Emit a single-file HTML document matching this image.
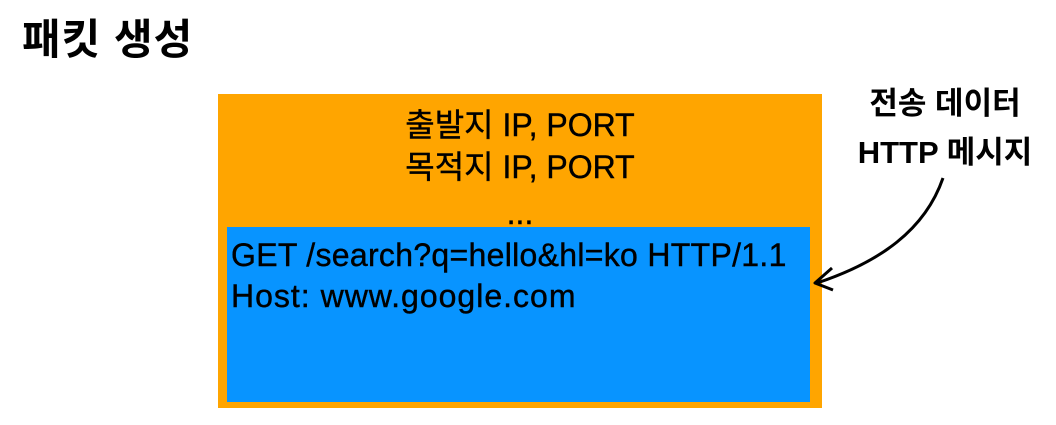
<!DOCTYPE html>
<html><head><meta charset="utf-8"><style>
body{margin:0;width:1056px;height:425px;background:#fff;position:relative;overflow:hidden;font-family:"Liberation Sans","Noto Sans CJK KR",sans-serif;color:#000}
.a{position:absolute;white-space:nowrap}
</style></head><body>
<div class="a" style="left:22px;top:15px;font-size:42px;font-weight:bold;line-height:50px;letter-spacing:1px">패킷 생성</div>
<div class="a" style="left:218px;top:94px;width:604px;height:314px;background:#FFA500"></div>
<div class="a" style="left:227px;top:227px;width:583px;height:175px;background:#0894FF"></div>
<div class="a" style="left:218px;top:104px;width:604px;text-align:center;font-size:32px;line-height:42px;-webkit-text-stroke:0.4px #000">출발지 IP, PORT<br>목적지 IP, PORT<br><span style="position:relative;top:4px">...</span></div>
<div class="a" style="left:231px;top:235px;font-size:32px;line-height:41px;letter-spacing:0.3px;-webkit-text-stroke:0.4px #000">GET /search?q=hello&amp;hl=ko HTTP/1.1<br><span style="letter-spacing:1px">Host: www.google.com</span></div>
<div class="a" style="left:840px;top:79px;width:210px;text-align:center;font-size:31px;font-weight:bold;line-height:49px">전송 데이터<br>HTTP 메시지</div>
<svg class="a" style="left:0;top:0" width="1056" height="425">
<path d="M943 178 C925 230 880 262 817 283" fill="none" stroke="#000" stroke-width="3"/>
<path d="M832 268 L815 283 L833 290" fill="none" stroke="#000" stroke-width="3" stroke-linejoin="round"/>
</svg>
</body></html>
